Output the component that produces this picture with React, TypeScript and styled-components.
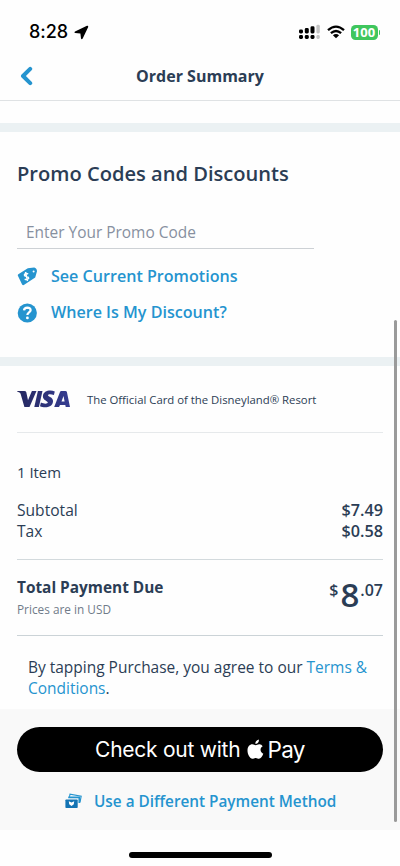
import React from 'react';
import styled, { createGlobalStyle } from 'styled-components';

const navy = '#2b3d55';
const blue = '#2594cf';

const GlobalStyle = createGlobalStyle`
  * { box-sizing: border-box; }
  body { margin: 0; background: #fefefe; }
  button { border: 0; background: none; padding: 0; margin: 0; font: inherit; color: inherit; }
`;

const Screen = styled.div`
  position: relative;
  width: 400px;
  height: 866px;
  overflow: hidden;
  display: flex;
  flex-direction: column;
  background: #fefefe;
  color: ${navy};
  font-family: 'Open Sans', 'Noto Sans', sans-serif;
  svg { display: block; flex: none; }
`;

const StatusBar = styled.div`
  height: 54px;
  padding: 10px 20px 0 29px;
  display: flex;
  align-items: center;
  color: #000;
  font-family: Inter, sans-serif;
`;

const Clock = styled.span`
  width: 45px;
  font-size: 18px;
  font-weight: 500;
  line-height: 22px;
  letter-spacing: -0.05px;
`;

const StatusIcons = styled.div`
  margin-left: auto;
  display: flex;
  align-items: center;
`;

const Battery = styled.span`
  width: 27px;
  height: 15px;
  margin-left: 6px;
  border-radius: 4.5px;
  background: #3fc65d;
  color: #fff;
  font: 700 13px/15px 'Open Sans', sans-serif;
  text-align: center;
`;

const BatteryTip = styled.span`
  width: 1.5px;
  height: 5px;
  margin-left: 1px;
  border-radius: 0 2px 2px 0;
  background: #3fc65d;
`;

const NavBar = styled.header`
  height: 47px;
  padding: 0 20px 3px;
  display: grid;
  grid-template-columns: 40px 1fr 40px;
  align-items: center;
  border-bottom: 1px solid #dfe2e4;
`;

const NavTitle = styled.h1`
  margin: 0;
  font-size: 16px;
  font-weight: 700;
  line-height: 22px;
  text-align: center;
  white-space: nowrap;
`;

const Band = styled.div<{ $top?: number }>`
  height: 9px;
  flex: none;
  margin-top: ${p => p.$top ?? 0}px;
  background: #ebf1f3;
`;

const PromoSection = styled.section`
  height: 225px;
  flex: none;
  padding: 27px 17px 0;
`;

const Heading = styled.h2`
  margin: 0;
  font-size: 20.1px;
  font-weight: 600;
  line-height: 30px;
  white-space: nowrap;
`;

const PromoField = styled.div`
  width: 297px;
  height: 32px;
  margin-top: 28px;
  padding-left: 9px;
  border-bottom: 1px solid #cdd1d5;
  color: #8790a0;
  font-size: 15.45px;
  line-height: 30px;
`;

const LinkList = styled.div`
  padding-top: 10px;
`;

const LinkRow = styled.button`
  height: 36px;
  display: flex;
  align-items: center;
  gap: 14px;
  color: ${blue};
  font-size: 16.1px;
  font-weight: 600;
  white-space: nowrap;
`;

const LinkText = styled.span`
  padding-bottom: 2px;
`;

const CardBanner = styled.section`
  height: 67px;
  flex: none;
  margin: 0 17px;
  display: flex;
  align-items: center;
  gap: 17px;
  border-bottom: 1px solid #e6e9eb;
  font-size: 11.35px;
  white-space: nowrap;
`;

const Summary = styled.section`
  height: 127px;
  flex: none;
  margin: 0 17px;
  padding-top: 29px;
  border-bottom: 1.5px solid #d3dadd;
  font-size: 15.6px;
  line-height: 21px;
`;

const ItemCount = styled.div`
  margin-bottom: 17px;
  font-size: 14.9px;
`;

const CostRow = styled.div`
  display: flex;
  justify-content: space-between;
`;

const Amount = styled.span`
  font-size: 16.2px;
  font-weight: 600;
`;

const TotalRow = styled.section`
  height: 76px;
  flex: none;
  margin: 0 17px;
  padding-top: 16px;
  display: flex;
  justify-content: space-between;
  border-bottom: 1px solid #cbd3d7;
`;

const TotalLabel = styled.div`
  font-size: 15.4px;
  font-weight: 700;
  line-height: 24px;
`;

const Currency = styled.div`
  color: #707b89;
  font-size: 11.82px;
  line-height: 19px;
`;

const Price = styled.div`
  display: flex;
  align-items: flex-start;
  font-size: 16px;
  font-weight: 600;
  line-height: 28px;
`;

const Dollars = styled.span`
  margin: 0 1px 0 2px;
  font-size: 33px;
  font-weight: 600;
  line-height: 38px;
`;

const Terms = styled.p`
  height: 73px;
  flex: none;
  margin: 0;
  padding: 21px 20px 0 28px;
  font-size: 15.47px;
  line-height: 21px;
  white-space: nowrap;
`;

const InlineLink = styled.a`
  color: ${blue};
`;

const Footer = styled.footer`
  height: 121px;
  flex: none;
  padding: 18px 17px 0;
  background: #f9f9f9;
`;

const PayButton = styled.button`
  width: 100%;
  height: 45px;
  border-radius: 23px;
  background: #000;
  color: #fff;
  display: flex;
  align-items: center;
  justify-content: center;
  font-family: Inter, sans-serif;
  font-size: 21px;
  letter-spacing: -0.25px;
  white-space: nowrap;
`;

const PayMark = styled.span`
  margin-left: 7px;
  display: flex;
  align-items: center;
  gap: 3px;
  font-size: 22.5px;
  letter-spacing: -0.6px;
`;

const AltMethod = styled.button`
  height: 58px;
  margin-left: 48px;
  display: flex;
  align-items: center;
  gap: 12px;
  color: ${blue};
  font-size: 15.32px;
  font-weight: 600;
  white-space: nowrap;
`;

const HomeIndicator = styled.div`
  width: 143px;
  height: 6px;
  margin: 22px auto 0;
  border-radius: 3px;
  background: #000;
`;

const ScrollThumb = styled.div`
  position: absolute;
  right: 3px;
  top: 320px;
  width: 3px;
  height: 502px;
  border-radius: 2px;
  background: #9a9a9a;
`;

const LocationArrow = () => (
  <svg width="15" height="15" viewBox="0 0 15 15">
    <path d="M13 .8 1 6.4Q-.2 7.5 1.2 8L6.4 8.5 7 13.6Q7.7 14.8 8.7 13.5L14.2 2Q14.4.4 13 .8Z" fill="#000" />
  </svg>
);

const Signal = () => (
  <svg width="21" height="16" viewBox="0 0 21 16">
    <g fill="#000">
      <rect x="0" y="5.5" width="4" height="4" rx="1.4" />
      <rect x="5.8" y="4" width="4" height="5.5" rx="1.4" />
      <rect x="11.5" y="2.3" width="4" height="7.2" rx="1.4" />
      <rect x="0" y="11" width="4" height="4" rx="1.4" />
      <rect x="5.8" y="11" width="4" height="4" rx="1.4" />
      <rect x="11.5" y="11" width="4" height="4" rx="1.4" />
    </g>
    <g fill="#c5c5c5">
      <rect x="17.4" y="0.8" width="3.4" height="8.7" rx="1.4" />
      <rect x="17.4" y="11" width="3.4" height="4" rx="1.4" />
    </g>
  </svg>
);

const WifiFill = styled.svg`
  margin-left: 7px;
`;

const Wifi = () => (
  <WifiFill width="18" height="14" viewBox="0 0 18 14">
    <g fill="none" stroke="#000" strokeWidth="2.3">
      <path d="M1 5.2Q9-2 17 5.2" />
      <path d="M3.9 8.2Q9 3.7 14.1 8.2" />
    </g>
    <path d="M5.9 10.2Q9 7.7 12.1 10.2L9 13.3Z" fill="#000" />
  </WifiFill>
);

const BackChevron = () => (
  <svg width="13" height="20" viewBox="0 0 13 20">
    <path d="M10.2 2.8 3 10l7.2 7.2" fill="none" stroke={blue} strokeWidth="4" strokeLinecap="round" strokeLinejoin="round" />
  </svg>
);

const TagIcon = () => (
  <svg width="20" height="20" viewBox="0 0 20 20">
    <path d="M.9 8.7Q.4 7.8 1.3 7.2L10.8 1.3 17.2.6Q19.8 1 20 4.3L18.2 10.4 7.2 17.8Q5.9 18.7 5.1 17.4Z" fill={blue} />
    <circle cx="16.6" cy="4.4" r="1" fill="#fff" />
    <g transform="rotate(-13 9.5 9.5)" fill="none" stroke="#fff" strokeWidth="1.4">
      <path d="M11.8 7.3Q9.5 5.7 8 7.1C6.6 9.5 12 9.1 11.3 11.7Q9.7 13.4 7.1 11.8M9.5 4.9V14.1" />
    </g>
  </svg>
);

const HelpIcon = () => (
  <svg width="20" height="20" viewBox="0 0 20 20">
    <circle cx="10.3" cy="10" r="9.6" fill={blue} />
    <path d="M7 7.3Q7.4 4.6 10.3 4.6 13.7 4.7 13.6 7.2C13.5 9.5 10.4 9.3 10.4 12" fill="none" stroke="#fff" strokeWidth="2.3" />
    <circle cx="10.4" cy="14.9" r="1.4" fill="#fff" />
  </svg>
);

const VisaLogo = () => (
  <svg width="53" height="18" viewBox="0 0 53 18" aria-label="Visa">
    <defs>
      <linearGradient id="visa" x1="0" x2="53" gradientUnits="userSpaceOnUse">
        <stop offset="0" stopColor="#25285f" />
        <stop offset="1" stopColor="#363d91" />
      </linearGradient>
    </defs>
    <g fill="url(#visa)">
      <path d="M.2.9H7.3Q8.9.9 9.3 2.2L11 10.2 14.9.9H19.5L12.5 17H7.4L3.8 4.4Q3.5 3.1 2.5 2.6L.1 1.6Z" />
      <path d="M20.9.9H25.5L21.9 17H17.3Z" />
      <path d="M37.8 1.4 36.9 5.1C34.4 4 31.2 3.8 31 5.2 30.9 6.8 36.4 7 36 11.5 35.5 17.9 27.3 18.2 23 16.3L23.9 12.5C27 14.1 30.7 14 30.8 12.5 30.9 10.9 25.6 10.4 25.9 6.2 26.3.6 33-.5 37.8 1.4Z" />
      <path fillRule="evenodd" d="M44.2.9H48.4Q49.6.9 49.9 2L53 17H48.7L48.3 15H43L42 17H37.2L43 2Q43.4.9 44.2.9ZM46.5 6.1 44.5 11.4H47.6Z" />
    </g>
  </svg>
);

const AppleIcon = () => (
  <svg width="17" height="21" viewBox="0 0 17 21" fill="#fff">
    <path d="M11.9 0.5Q12.2 4.3 8.4 5.1 8 1.6 11.9.5Z" />
    <path d="M8.7 6.2C10 6.2 10.6 5.2 12.5 5.3Q14.5 5.4 15.7 7.2C12.5 9 13 13.4 16.3 14.7 15.2 17.5 13.8 19.7 12 19.7 10.7 19.7 10.3 18.9 8.7 18.9S6.5 19.7 5.4 19.8C2.9 19.8.5 15.4.5 11.6.5 7.5 2.9 5.3 5.3 5.3 6.9 5.3 7.7 6.2 8.7 6.2Z" />
  </svg>
);

const CardsIcon = () => (
  <svg width="17" height="16" viewBox="0 0 17 16">
    <path d="M4.5 3.8 5 1.2 16.2 3.1 15 9.3" fill="none" stroke={blue} strokeWidth="1.1" />
    <path d="M3.2 4.4H14.3V10" fill="none" stroke={blue} strokeWidth="1.7" />
    <rect x=".4" y="6.4" width="12.3" height="8.6" rx=".8" fill="#1474b4" />
    <path d="M3.8 8.2 6.5 9.4 9.2 8.2 8.8 11.3 6.5 12.9 4.2 11.3Z" fill="#fff" />
  </svg>
);

export default function App() {
  return (
    <>
      <GlobalStyle />
      <Screen>
        <StatusBar>
          <Clock>8:28</Clock>
          <LocationArrow />
          <StatusIcons>
            <Signal />
            <Wifi />
            <Battery>100</Battery>
            <BatteryTip />
          </StatusIcons>
        </StatusBar>
        <NavBar>
          <button aria-label="Back"><BackChevron /></button>
          <NavTitle>Order Summary</NavTitle>
        </NavBar>
        <Band $top={22} />
        <PromoSection>
          <Heading>Promo Codes and Discounts</Heading>
          <PromoField>Enter Your Promo Code</PromoField>
          <LinkList>
            <LinkRow><TagIcon /><LinkText>See Current Promotions</LinkText></LinkRow>
            <LinkRow><HelpIcon /><LinkText>Where Is My Discount?</LinkText></LinkRow>
          </LinkList>
        </PromoSection>
        <Band />
        <CardBanner>
          <VisaLogo />
          <span>The Official Card of the Disneyland® Resort</span>
        </CardBanner>
        <Summary>
          <ItemCount>1 Item</ItemCount>
          <CostRow><span>Subtotal</span><Amount>$7.49</Amount></CostRow>
          <CostRow><span>Tax</span><Amount>$0.58</Amount></CostRow>
        </Summary>
        <TotalRow>
          <div>
            <TotalLabel>Total Payment Due</TotalLabel>
            <Currency>Prices are in USD</Currency>
          </div>
          <Price><span>$</span><Dollars>8</Dollars><span>.07</span></Price>
        </TotalRow>
        <Terms>
          By tapping Purchase, you agree to our <InlineLink>Terms &amp;</InlineLink>
          <br />
          <InlineLink>Conditions</InlineLink>.
        </Terms>
        <Footer>
          <PayButton>
            <span>Check out with</span>
            <PayMark><AppleIcon />Pay</PayMark>
          </PayButton>
          <AltMethod><CardsIcon />Use a Different Payment Method</AltMethod>
        </Footer>
        <HomeIndicator />
        <ScrollThumb />
      </Screen>
    </>
  );
}
